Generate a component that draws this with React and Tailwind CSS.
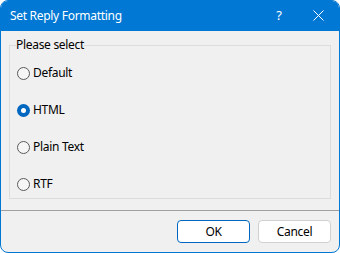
import { useState } from 'react'

const options = ['Default', 'HTML', 'Plain Text', 'RTF']

function Radio({ checked }) {
  if (checked) {
    return (
      <span className="flex h-[13px] w-[13px] items-center justify-center rounded-full bg-[#0067c0]">
        <span className="h-[5px] w-[5px] rounded-full bg-white" />
      </span>
    )
  }
  return <span className="h-[13px] w-[13px] rounded-full border border-[#5a5a5a] bg-[#f6f6f6]" />
}

export default function App() {
  const [value, setValue] = useState('HTML')

  return (
    <div className="flex h-[253px] w-[340px] flex-col overflow-hidden rounded-t-[8px] rounded-b-[8px] border border-[#0078d4] bg-[#f0f0f0] font-['Segoe_UI','Noto_Sans',sans-serif] text-[12px] tracking-[-0.3px] text-black">
      {/* Title bar */}
      <div className="-mx-px -mt-px flex h-[31px] shrink-0 items-center bg-[#0078d4] pl-[10px] text-white">
        <span className="flex-1 text-[12px]">Set Reply Formatting</span>
        <span className="w-[22px] text-center text-[13px]">?</span>
        <svg className="ml-[23px] mr-[16px]" width="11" height="11" viewBox="0 0 11 11">
          <path d="M0.5 0.5 L10.5 10.5 M10.5 0.5 L0.5 10.5" stroke="white" strokeWidth="1" />
        </svg>
      </div>

      {/* Group box */}
      <div className="px-[8px] pt-[6px]">
        <fieldset className="h-[162px] border border-[#dcdcdc] pl-[6px] pr-[7px]">
          <legend className="leading-[16px]">Please select</legend>
          <div className="ml-px mt-[13px] flex flex-col gap-[23px]">
            {options.map((opt) => (
              <label
                key={opt}
                onClick={() => setValue(opt)}
                className="flex h-[14px] cursor-default items-center gap-[3px]"
              >
                <Radio checked={value === opt} />
                <span>{opt}</span>
              </label>
            ))}
          </div>
        </fieldset>
      </div>

      <div className="mt-[11px] border-t border-[#a0a0a0]" />

      {/* Buttons */}
      <div className="flex justify-end gap-[8px] pr-[8px] pt-[9px]">
        <button className="h-[23px] w-[73px] rounded-[4px] border border-[#0067c0] bg-white text-[12px]">OK</button>
        <button className="h-[23px] w-[73px] rounded-[4px] border border-[#d0d0d0] bg-white text-[12px]">Cancel</button>
      </div>
    </div>
  )
}
